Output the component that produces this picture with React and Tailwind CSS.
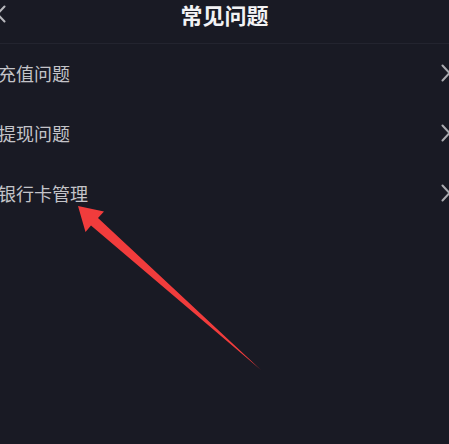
import React from 'react';

const items = ['充值问题', '提现问题', '银行卡管理'];

const Chevron = ({ dir = 'right', className = '' }) => (
  <svg width="10" height="18" viewBox="0 0 10 18" fill="none" className={className}>
    <path
      d={dir === 'right' ? 'M1.5 1.5 L8.5 9 L1.5 16.5' : 'M8.5 1.5 L1.5 9 L8.5 16.5'}
      stroke="currentColor"
      strokeWidth="2"
      strokeLinecap="round"
      strokeLinejoin="round"
    />
  </svg>
);

const App = () => {
  return (
    <div
      className="relative w-[449px] h-[444px] overflow-hidden bg-[#191a24]"
      style={{ fontFamily: '"Noto Sans CJK SC", "Noto Sans", sans-serif' }}
    >
      {/* Header */}
      <div className="relative h-[44px] flex items-start justify-center border-b border-[#23242f]">
        <Chevron dir="left" className="absolute -left-[4px] top-[5px] text-[#b8b8bd]" />
        <h1 className="text-[22px] font-bold text-[#f2f2f4] leading-[28px]">常见问题</h1>
      </div>

      {/* List */}
      <ul>
        {items.map((label) => (
          <li key={label} className="h-[60px] flex items-center justify-between">
            <span className="-ml-[2px] -mt-[2px] text-[18px] text-[#c4c4c9] leading-[24px]">{label}</span>
            <Chevron className="-mr-[2px] -mt-[2px] text-[#a9a9ae]" />
          </li>
        ))}
      </ul>

      {/* Annotation arrow */}
      <svg className="absolute left-0 top-0" width="449" height="444" viewBox="0 0 449 444">
        <polygon
          points="78,206 104,211.5 98,218 261,370 91,225.5 85.5,232"
          fill="#f13c3c"
          strokeLinejoin="round"
        />
      </svg>
    </div>
  );
};

export default App;
